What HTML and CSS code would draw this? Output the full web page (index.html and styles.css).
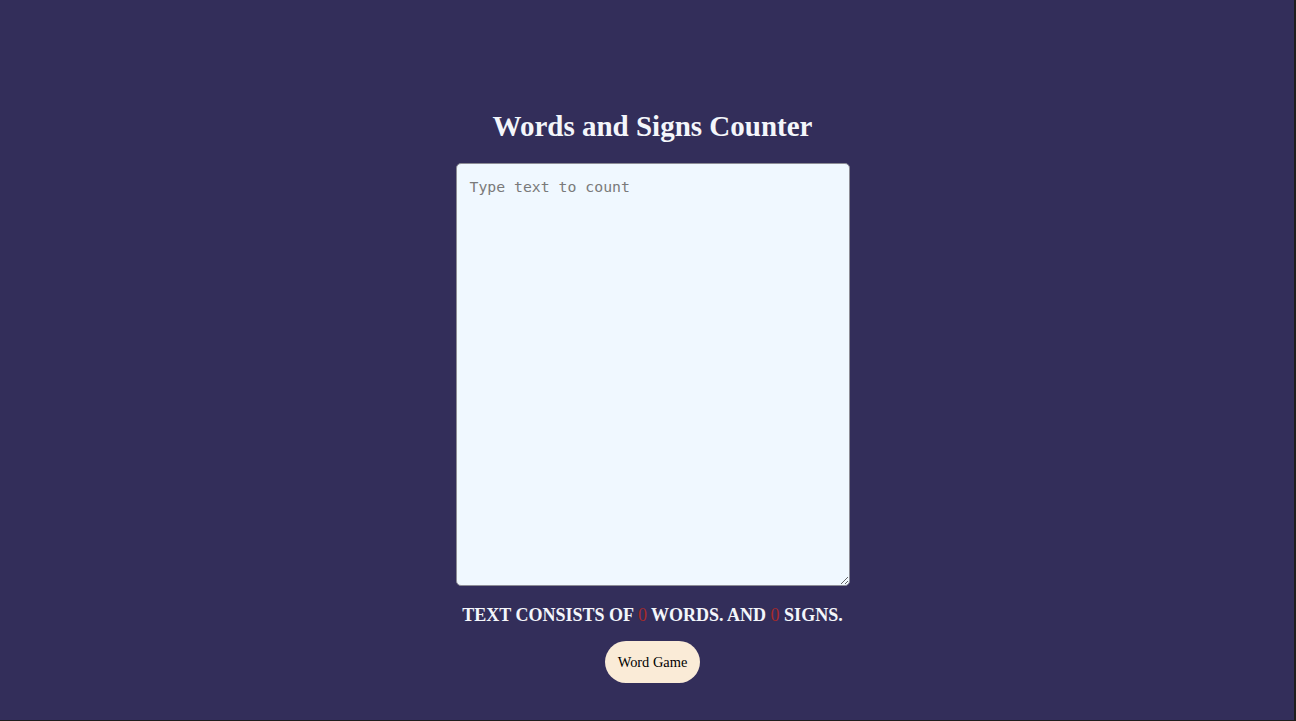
FILE: index.html
```html
<!DOCTYPE html>
<html>
<head>
<meta charset="utf-8">
<link rel="stylesheet" href="styles.css">
</head>
<body>
<div class="frame">
  <main class="app">
    <h1 class="title">Words and Signs Counter</h1>
    <textarea class="input" placeholder="Type text to count"></textarea>
    <p class="result">TEXT CONSISTS OF <span class="num">0</span> WORDS. AND <span class="num">0</span> SIGNS.</p>
    <button class="game">Word Game</button>
  </main>
</div>
</body>
</html>
```
FILE: styles.css
```css
html, body {
  margin: 0;
  padding: 0;
  height: 100%;
  background: #1e1e1e;
}
.frame {
  box-sizing: border-box;
  height: 720px;
  width: 1294px;
  background: #332e5a;
  font-family: "Liberation Serif", "Times New Roman", serif;
  color: #ffffff;
}
.app {
  display: flex;
  flex-direction: column;
  align-items: center;
  padding-top: 93px;
  padding-left: 11px;
}
.title {
  font-size: 29px;
  font-weight: bold;
  margin: 15px 0 18px;
  line-height: 37px;
  color: #f4f6fb;
}
.input {
  box-sizing: border-box;
  width: 394px;
  height: 423px;
  margin: 0;
  padding: 14px 13px;
  background: #f0f8ff;
  border: 1px solid #8d8d96;
  border-radius: 5px;
  font-family: "DejaVu Sans Mono", monospace;
  font-size: 14.8px;
  line-height: 18px;
  resize: vertical;
  outline: none;
}
.input::placeholder {
  color: #7a7a7a;
}
.result {
  margin: 18px 0 15px;
  font-size: 18px;
  font-weight: bold;
  line-height: 22px;
  color: #f4f6fb;
}
.num {
  color: #a52a2a;
  font-weight: normal;
}
.game {
  width: 95px;
  height: 42px;
  border: none;
  border-radius: 21px;
  background: #faebd7;
  font-family: "Liberation Serif", "Times New Roman", serif;
  font-size: 14.4px;
  color: #000;
  padding: 0;
}
```
